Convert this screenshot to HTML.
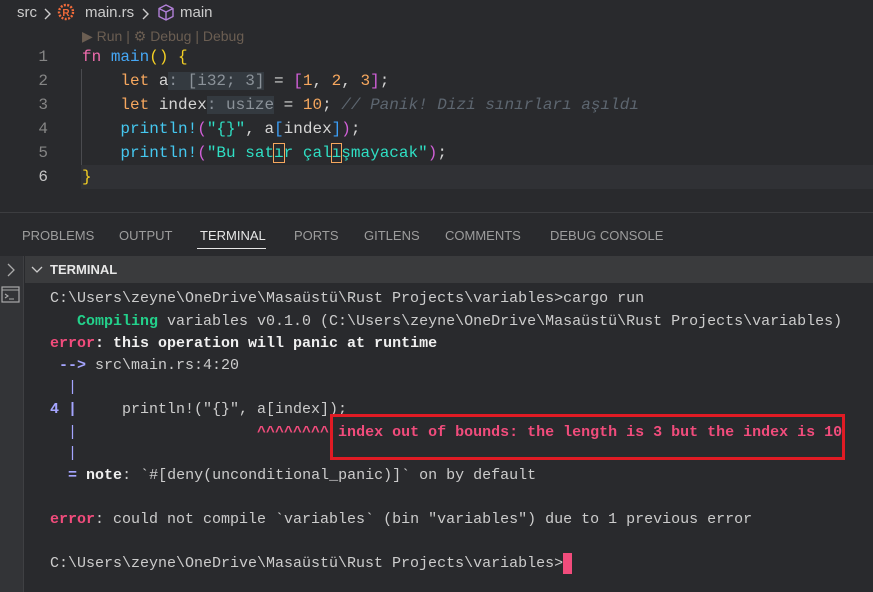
<!DOCTYPE html>
<html><head><meta charset="utf-8"><style>
*{margin:0;padding:0;box-sizing:border-box}
body{width:873px;height:592px;background:#292a2d;overflow:hidden;position:relative;font-family:"Liberation Sans",sans-serif}
.ab{position:absolute;white-space:pre}
.code{font-family:"Liberation Mono",monospace;font-size:16px;line-height:24px;color:#d4d4d4}
.ln{font-family:"Liberation Mono",monospace;font-size:16px;line-height:24px;color:#858585;text-align:right;width:48px;left:0}
.kw{color:#f6a75e}.fn{color:#45a7f5}.mac{color:#45c8f0}.str{color:#2fdfc4}.num{color:#f6a75e}
.hint{background:#343a40;color:#8b9299}
.cm{color:#5d6670;font-style:italic}
.y{color:#f5d024}.p{color:#d15fd8}.b{color:#3b9df5}
.t{font-family:"Liberation Mono",monospace;font-size:15px;line-height:22px;color:#cccccc;left:50px}
.err{color:#f14c7c;font-weight:bold}.bold{font-weight:bold;color:#f0f0f0}
.grn{color:#23d18b;font-weight:bold}.blu{color:#a5a5ff}
.tab{position:absolute;top:228px;font-size:13px;color:#9d9d9d}
</style></head><body>
<div class="ab" style="left:17px;top:4px;font-size:15px;color:#cccccc">src</div>
<svg class="ab" style="left:43px;top:7px" width="10" height="14"><path d="M2 2l5 5-5 5" stroke="#ccc" stroke-width="1.4" fill="none"/></svg>
<svg class="ab" style="left:57px;top:3px" width="18" height="18"><circle cx="9" cy="9" r="7" fill="none" stroke="#f26b3a" stroke-width="2.4" stroke-dasharray="2 1.4"/><text x="9" y="13" font-size="10" font-weight="bold" fill="#f26b3a" text-anchor="middle" font-family="Liberation Sans">R</text></svg>
<div class="ab" style="left:85px;top:4px;font-size:15px;color:#cccccc">main.rs</div>
<svg class="ab" style="left:141px;top:7px" width="10" height="14"><path d="M2 2l5 5-5 5" stroke="#ccc" stroke-width="1.4" fill="none"/></svg>
<svg class="ab" style="left:157px;top:3px" width="18" height="18"><path d="M9 2l7 3.5v8L9 17l-7-3.5v-8z M2 5.5L9 9l7-3.5 M9 9v8" stroke="#b180d7" stroke-width="1.4" fill="none" stroke-linejoin="round"/></svg>
<div class="ab" style="left:180px;top:4px;font-size:15px;color:#cccccc">main</div>
<div class="ab" style="left:82px;top:28px;font-size:14px;color:#6b5e52">▶ Run | ⚙ Debug | Debug</div>
<div class="ab" style="left:81px;top:165px;width:792px;height:24px;background:#303135"></div>
<div class="ab" style="left:81px;top:69px;width:1px;height:96px;background:#4a4b4f"></div>
<div class="ab ln" style="top:45px">1</div>
<div class="ab ln" style="top:69px">2</div>
<div class="ab ln" style="top:93px">3</div>
<div class="ab ln" style="top:117px">4</div>
<div class="ab ln" style="top:141px">5</div>
<div class="ab ln" style="top:165px;color:#c6c6c6">6</div>
<div class="ab code" style="left:82px;top:45px"><span class="kw" style="color:#f06cae">fn</span> <span class="fn">main</span><span class="y">()</span> <span class="y">{</span></div>
<div class="ab code" style="left:82px;top:69px">    <span class="kw">let</span> a<span class="hint">: [i32; 3]</span> = <span class="p">[</span><span class="num">1</span>, <span class="num">2</span>, <span class="num">3</span><span class="p">]</span>;</div>
<div class="ab code" style="left:82px;top:93px">    <span class="kw">let</span> index<span class="hint">: usize</span> = <span class="num">10</span>; <span class="cm">// Panik! Dizi sınırları aşıldı</span></div>
<div class="ab code" style="left:82px;top:117px">    <span class="mac">println!</span><span class="p">(</span><span class="str">"{}"</span>, a<span class="b">[</span>index<span class="b">]</span><span class="p">)</span>;</div>
<div class="ab code" style="left:82px;top:141px">    <span class="mac">println!</span><span class="p">(</span><span class="str">"Bu sat<span style="outline:1px solid #f6a75e">ı</span>r çal<span style="outline:1px solid #f6a75e">ı</span>şmayacak"</span><span class="p">)</span>;</div>
<div class="ab code" style="left:82px;top:165px"><span class="y">}</span></div>
<div class="ab" style="left:0;top:212px;width:873px;height:1px;background:#3c3d40"></div>
<div class="tab" style="left:22px">PROBLEMS</div>
<div class="tab" style="left:119px">OUTPUT</div>
<div class="tab" style="left:200px;color:#e7e7e7">TERMINAL</div>
<div class="ab" style="left:197px;top:248px;width:69px;height:1px;background:#e7e7e7"></div>
<div class="tab" style="left:294px">PORTS</div>
<div class="tab" style="left:364px">GITLENS</div>
<div class="tab" style="left:445px">COMMENTS</div>
<div class="tab" style="left:550px">DEBUG CONSOLE</div>
<div class="ab" style="left:0;top:256px;width:24px;height:336px;background:#333437;border-right:1px solid #3f4043"></div>
<svg class="ab" style="left:4px;top:262px" width="14" height="16"><path d="M4 2l6 6-6 6" stroke="#aaa" stroke-width="1.3" fill="none"/></svg>
<svg class="ab" style="left:1px;top:286px" width="20" height="18"><rect x="1" y="1" width="17" height="15" stroke="#aaa" stroke-width="1.2" fill="none"/><path d="M1 4h17M4 8l3 2-3 2M8 13h5" stroke="#aaa" stroke-width="1.1" fill="none"/></svg>
<div class="ab" style="left:25px;top:256px;width:848px;height:27px;background:#3a3b3d"></div>
<svg class="ab" style="left:30px;top:263px" width="14" height="14"><path d="M2 4l5 5 5-5" stroke="#ccc" stroke-width="1.3" fill="none"/></svg>
<div class="ab" style="left:50px;top:262px;font-size:13px;font-weight:bold;color:#e7e7e7">TERMINAL</div>
<div class="ab t" style="top:288px">C:\Users\zeyne\OneDrive\Masaüstü\Rust Projects\variables&gt;cargo run</div>
<div class="ab t" style="top:311px">   <span class="grn">Compiling</span> variables v0.1.0 (C:\Users\zeyne\OneDrive\Masaüstü\Rust Projects\variables)</div>
<div class="ab t" style="top:333px"><span class="err">error</span><span class="bold">: this operation will panic at runtime</span></div>
<div class="ab t" style="top:355px"> <span class="blu" style="font-weight:bold">--&gt;</span> src\main.rs:4:20</div>
<div class="ab t" style="top:377px"><span class="blu">  |</span></div>
<div class="ab t" style="top:399px"><span class="blu" style="font-weight:bold">4 |</span>     println!("{}", a[index]);</div>
<div class="ab t" style="top:422px"><span class="blu">  |</span>                    <span class="err">^^^^^^^^ index out of bounds: the length is 3 but the index is 10</span></div>
<div class="ab t" style="top:443px"><span class="blu">  |</span></div>
<div class="ab t" style="top:465px">  <span class="blu" style="font-weight:bold">=</span> <span class="bold">note</span>: `#[deny(unconditional_panic)]` on by default</div>
<div class="ab t" style="top:509px"><span class="err">error</span>: could not compile `variables` (bin "variables") due to 1 previous error</div>
<div class="ab t" style="top:553px">C:\Users\zeyne\OneDrive\Masaüstü\Rust Projects\variables&gt;</div>
<div class="ab" style="left:563px;top:553px;width:9px;height:21px;background:#f14c7c"></div>
<div class="ab" style="left:330px;top:414px;width:515px;height:46px;border:3px solid #e01b24"></div>
</body></html>
